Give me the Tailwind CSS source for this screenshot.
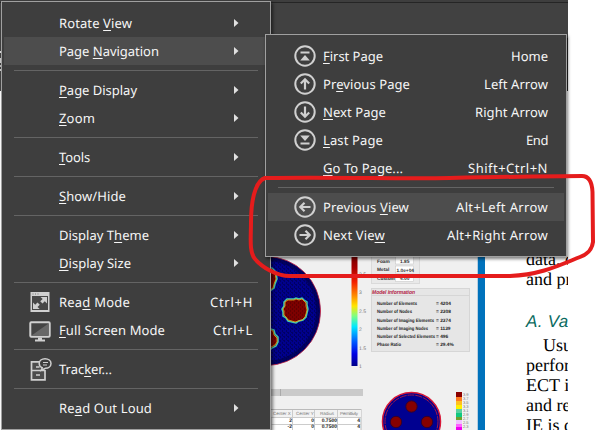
<!DOCTYPE html>
<html lang="en">
<head>
  <meta charset="UTF-8">
  <title>View Menu</title>
  <script src="https://cdn.jsdelivr.net/npm/@tailwindcss/browser@4"></script>
</head>
<body class="bg-white">
  <div class="relative w-[595px] h-[430px] overflow-hidden font-['Noto_Sans','Open_Sans',sans-serif] text-[13px] text-[#f6f6f6] [text-rendering:geometricPrecision]">

    <!-- Application window -->
    <div class="w-[568px] h-[430px] flex flex-col bg-white overflow-hidden">
      <div class="h-[3px] shrink-0 bg-[#3e3e3e] border-b border-[#252525]"></div>
      <div class="h-[88px] shrink-0 bg-[#414141] pt-12">
        <div class="w-px h-[2px] bg-[#ddd]"></div>
        <div class="w-px h-[5px] mt-[5px] bg-[#ccc]"></div>
        <div class="w-px h-[2px] mt-[2px] bg-[#bbb]"></div>
        <div class="w-px h-[2px] mt-[2px] bg-[#ccc]"></div>
      </div>
      <div class="flex h-[339px]">
        <div class="w-[271px] shrink-0"></div>

        <!-- Figure page -->
        <div class="w-[206px] shrink-0 bg-[#f0f0f0] pt-[166px]">
          <svg class="block" width="206" height="173" viewBox="271 257 206 173" font-family="Liberation Sans, sans-serif">
            <defs>
              <linearGradient id="jet" x1="0" y1="0" x2="0" y2="1">
                <stop offset="0" stop-color="#7c0000"/>
                <stop offset=".1" stop-color="#a80000"/>
                <stop offset=".23" stop-color="#f42000"/>
                <stop offset=".36" stop-color="#ff9000"/>
                <stop offset=".45" stop-color="#ffe600"/>
                <stop offset=".54" stop-color="#80ff80"/>
                <stop offset=".64" stop-color="#00e8ff"/>
                <stop offset=".78" stop-color="#0058ff"/>
                <stop offset=".89" stop-color="#0000e4"/>
                <stop offset="1" stop-color="#000088"/>
              </linearGradient>
              <pattern id="mesh" width="4" height="4" patternUnits="userSpaceOnUse">
                <rect width="4" height="4" fill="#00008c"/>
                <path d="M0 1h1M2 3h1M3 0h1" stroke="#00003c"/>
              </pattern>
              <pattern id="mesh2" width="4" height="4" patternUnits="userSpaceOnUse">
                <rect width="4" height="4" fill="#7c0000"/>
                <path d="M0 1h1M2 3h1" stroke="#4a0000"/>
              </pattern>
            </defs>
            <circle cx="266" cy="311" r="54.500" fill="url(#mesh)" stroke="#c03050"/>
            <circle cx="266" cy="311" r="52" fill="none" stroke="#000048" stroke-width="4" opacity=".6"/>
            <g fill="url(#mesh2)" stroke="#40c8b0" stroke-width="1.500">
              <path d="M262 268h10l4 4 1 7-2 5-1 4-4 3-8 1z"/>
              <path d="M290 299l4 0 2-1 3 1 3-1 2 2 3 2 0 3 1 4-1 4-1 4-3 3-4 1-3 2-4-1-4-1-2-3-3-2 0-4-1-3 2-3 0-4 3-3z"/>
              <path d="M262 329h9l3 1 1 4 3 3 0 5-2 4-4 2-3 3-7 0z"/>
            </g>
            <g fill="none" stroke="#e8b020" stroke-width=".8">
              <path d="M271 269l4 4 1 6-2 5-1 4-3 2"/>
              <path d="M290 300l4 0 2-1 3 1 3-1 2 2 2 2 0 3 1 4-1 4-1 3-3 3-4 1-3 1-3-1-4-1-2-3-2-2 0-4-1-2 2-3 0-4 3-2z"/>
              <path d="M271 330l2 1 1 4 3 3 0 4-2 3-4 2"/>
            </g>
            <rect x="351.500" y="257" width="6" height="109" fill="url(#jet)"/>
            <g font-size="5" fill="#777">
              <text x="359" y="276">3.5</text><text x="359" y="294">3</text><text x="359" y="313">2.5</text>
              <text x="359" y="331">2</text><text x="359" y="350">1.5</text><text x="359" y="368">1</text>
            </g>

            <!-- settings box -->
            <rect x="371.500" y="250" width="48" height="33.500" fill="#e9e9e9" stroke="#dadada"/>
            <g fill="#fff" stroke="#c8c8c8" stroke-width=".6">
              <rect x="395.500" y="256" width="18" height="8"/><rect x="395.500" y="266" width="18" height="7"/><rect x="395.500" y="274.500" width="18" height="7"/>
            </g>
            <g font-size="4.800" font-weight="bold" fill="#333">
              <text x="377" y="262.500">Foam</text><text x="377" y="271">Metal</text><text x="377" y="280">Custom</text>
              <text x="400" y="262.500">1.85</text><text x="396.500" y="271.500">1.0e+04</text><text x="400" y="280">4.00</text>
            </g>

            <!-- model information -->
            <rect x="371.500" y="288.500" width="98" height="63" fill="#e6e6e6" stroke="#d6d6d6"/>
            <text x="372" y="294" font-size="5.500" font-weight="bold" font-style="italic" fill="#b01840" textLength="43" lengthAdjust="spacingAndGlyphs">Model Information</text>
            <path d="M372 295.500h97" stroke="#d6d6d6"/>
            <g font-size="4.800" font-weight="bold" fill="#222" lengthAdjust="spacingAndGlyphs">
              <text x="377" y="305" textLength="40" lengthAdjust="spacingAndGlyphs">Number of Elements</text>
              <text x="377" y="313" textLength="35" lengthAdjust="spacingAndGlyphs">Number of Nodes</text>
              <text x="377" y="321.500" textLength="57" lengthAdjust="spacingAndGlyphs">Number of Imaging Elements</text>
              <text x="377" y="329.500" textLength="51" lengthAdjust="spacingAndGlyphs">Number of Imaging Nodes</text>
              <text x="377" y="338" textLength="58" lengthAdjust="spacingAndGlyphs">Number of Selected Elements</text>
              <text x="377" y="346" textLength="24" lengthAdjust="spacingAndGlyphs">Phase Ratio</text>
              <text x="436" y="305">= 4204</text><text x="436" y="313">= 2308</text><text x="436" y="321.500">= 2374</text>
              <text x="436" y="329.500">= 1139</text><text x="436" y="338">= 496</text><text x="436" y="346">= 29.4%</text>
            </g>

            <!-- table -->
            <rect x="271" y="389" width="92" height="7" fill="#cacaca"/>
            <path d="M280.500 389v7" stroke="#aaa"/>
            <rect x="271" y="409.500" width="90" height="22" fill="#fff" stroke="#bbb"/>
            <rect x="271" y="410" width="90" height="7" fill="#f2f2f2"/>
            <path d="M271 417.500h90M271 424.500h90M292.500 410v20M314.500 410v20M337.500 410v20" stroke="#ccc"/>
            <g font-size="4.500" fill="#777">
              <text x="273" y="415">Center X</text><text x="296" y="415">Center Y</text><text x="320" y="415">Radius</text><text x="340" y="415" textLength="18">Permittivity</text>
            </g>
            <g font-size="5" font-weight="bold" fill="#222" text-anchor="end">
              <text x="292" y="421.500">2</text><text x="314" y="421.500">0</text><text x="337" y="421.500">0.7500</text><text x="360" y="421.500">4</text>
              <text x="292" y="428">-2</text><text x="314" y="428">0</text><text x="337" y="428">0.7500</text><text x="360" y="428">4</text>
            </g>

            <!-- second phantom -->
            <circle cx="411.500" cy="421.500" r="29" fill="#000090" stroke="#d81838" stroke-width="1.500"/>
            <circle cx="411.500" cy="421.500" r="26.500" fill="none" stroke="#a01848" stroke-dasharray="7 1"/>
            <g fill="#860000" stroke="#300030">
              <circle cx="411.500" cy="406.500" r="5.700"/><circle cx="396" cy="422" r="5.700"/><circle cx="427" cy="422" r="5.700"/>
            </g>
            <g>
              <rect x="456" y="392" width="6" height="5" fill="#8a0000"/><rect x="456" y="397" width="6" height="4" fill="#ff7a20"/>
              <rect x="456" y="401" width="6" height="4" fill="#ffc020"/><rect x="456" y="405" width="6" height="4" fill="#fff000"/>
              <rect x="456" y="409" width="6" height="4" fill="#58d0a0"/><rect x="456" y="413" width="6" height="4" fill="#10c880"/>
              <rect x="456" y="417" width="6" height="3" fill="#70a030"/><rect x="456" y="420" width="6" height="4" fill="#f0c0ff"/>
              <rect x="456" y="424" width="6" height="3" fill="#ff60ff"/><rect x="456" y="427" width="6" height="3" fill="#f000f0"/>
            </g>
            <g font-size="4" fill="#777">
              <text x="463" y="396">3.9</text><text x="463" y="400">3.7</text><text x="463" y="404">3.5</text><text x="463" y="408">3.3</text>
              <text x="463" y="412">3.1</text><text x="463" y="416">2.9</text><text x="463" y="420">2.7</text><text x="463" y="424">2.5</text><text x="463" y="428">2.3</text>
            </g>
          </svg>
        </div>
        <div class="w-2 shrink-0 bg-[#0072bc] border-l border-[#b8cfe0]"></div>

        <!-- Article column -->
        <div class="w-[83px] shrink-0 overflow-hidden pl-[41px] pt-[158px] font-['Liberation_Serif',serif] text-[18px] leading-5 text-black whitespace-nowrap">
          <p>data, c</p>
          <p>and pr</p>
          <p class="pt-[23px] font-['Liberation_Sans',sans-serif] italic text-[#0b6b60] tracking-[0.3px] text-[17px]">A. Va</p>
          <p class="pt-[3px] pl-[17px]">Usu</p>
          <p>perfor</p>
          <p>ECT i</p>
          <p>and re</p>
          <p>IE is d</p>
        </div>
      </div>
    </div>
    <div class="absolute left-[567px] top-[38px] w-px h-[53px] bg-[#222]"></div>

    <!-- View menu -->
    <div id="viewMenu" class="absolute left-px top-px w-[270px] h-[429px] bg-[#3e3e3e] border border-[#a0a0a0] px-[2px] py-[7px] shadow-[2px_2px_3px_rgba(0,0,0,0.5)]"></div>

    <!-- Page Navigation submenu -->
    <div id="navMenu" class="absolute left-[265px] top-[34px] w-[302px] h-[223px] bg-[#3e3e3e] border border-[#a0a0a0] px-[2px] py-[7px] shadow-[1px_2px_3px_rgba(0,0,0,0.5)]"></div>

    <!-- Red marker -->
    <svg class="absolute left-0 top-0" width="595" height="430" fill="none" stroke="#e51c1c" stroke-width="4" stroke-linecap="round" stroke-linejoin="round">
      <path d="M265 178C340 177 400 179 450 178C500 177 550 176 582 176C589 176 592 182 592.500 192L593 242C592 250 588 254 580 257C560 265 540 275 510 276L290 276C276 276 262 267 255 259C249 252 251 238 251 222C251 204 254 182 265 178Z"/>
    </svg>
  </div>

  <script>
    const icons = {
      first: '<path d="M6.500 7.500h9" stroke-width="2"/><path d="M6.200 15.500h9.600L11 10z" fill="#d0d0d0" stroke="none"/>',
      last: '<path d="M6.500 14.500h9" stroke-width="2"/><path d="M6.200 6.500h9.600L11 12z" fill="#d0d0d0" stroke="none"/>',
      up: '<path d="M11 16.500v-10M6.800 10.500l4.200-4.200 4.200 4.200"/>',
      down: '<path d="M11 5.500v10M6.800 11.500l4.200 4.200 4.200-4.200"/>',
      left: '<path d="M16.500 11h-10M10.500 6.800l-4.200 4.200 4.200 4.200"/>',
      right: '<path d="M5.500 11h10M11.500 6.800l4.200 4.200-4.200 4.200"/>',
      read: '<rect x="1.500" y="2" width="19" height="20" fill="#d0d0d0"/><path d="M3.500 4h1M6 4h1M8.500 4h1" stroke="#777" stroke-width="1"/><rect x="3" y="6" width="16" height="14" fill="#484848"/><path d="M11.500 7H18v6.500l-2.200-2.200-2.300 2.200-2.300-2.200 2.500-2.200zM4 12.500l2.200 2.200 2.300-2.200 2.300 2.300-2.300 2.200 2.200 2H4z" fill="#d0d0d0"/>',
      screen: '<rect x="1.300" y="4.300" width="19.400" height="14.400" rx="1" fill="#444" stroke="#d0d0d0" stroke-width="2"/><path d="M2.500 17.500h17V5.500z" fill="#686868"/><path d="M9 19.500h4v2h3v2H6v-2h3z" fill="#d0d0d0"/>',
      tracker: '<path d="M10 4.800H2.500v18h13.500V13M3 13.500h13" fill="#4d4d4d" stroke="#d0d0d0" stroke-width="1.700"/><path d="M7 10h3.500M7 18h4" stroke="#d0d0d0" stroke-width="1.300"/><path d="M16 1.800c3.500 0 6 2 6 4.700s-2.500 4.700-5.500 4.700l-4.300 2 1-2.500c-2-.8-3-2.300-3-4.200 0-2.700 2.500-4.700 5.800-4.700z" fill="#3e3e3e" stroke="#d0d0d0" stroke-width="1.500"/><path d="M14 5.500h5M14 8h4" stroke="#d0d0d0" stroke-width="1.200"/>'
    };

    // [label, width, icon, shortcut, shortcut width, highlighted]; "_" marks the access key
    const viewItems = [
      ["Rotate _View", 73, "", ">"],
      ["Page _Navigation", 100, "", ">", 0, true],
      null,
      ["_Page Display", 78, "", ">"],
      ["_Zoom", 36, "", ">"],
      null,
      ["_Tools", 31, "", ">"],
      null,
      ["_Show/Hide", 67, "", ">"],
      null,
      ["Display T_heme", 90, "", ">"],
      ["_Display Size", 72, "", ">"],
      null,
      ["Rea_d Mode", 71, "read", "Ctrl+H", 43],
      ["_Full Screen Mode", 106, "screen", "Ctrl+L", 40],
      null,
      ["Trac_ker...", 53, "tracker", ""],
      null,
      ["Re_ad Out Loud", 93, "", ">"]
    ];
    const navItems = [
      ["_First Page", 60, "first", "Home", 37],
      ["Pr_evious Page", 87, "up", "Left Arrow", 64],
      ["_Next Page", 63, "down", "Right Arrow", 73],
      ["_Last Page", 60, "last", "End", 22],
      ["_Go To Page...", 80, "", "Shift+Ctrl+N", 80],
      null,
      ["Previous _View", 86, "left", "Alt+Left Arrow", 92, true],
      ["Next Vie_w", 62, "right", "Alt+Right Arrow", 101]
    ];

    function buildMenu(id, items, nav) {
      document.getElementById(id).innerHTML = items.map(item => {
        if (!item) {
          return '<div class="h-[11px] flex items-center px-[10px]"><div class="h-px w-full bg-[#646464]' + (nav ? '' : ' mr-[-3px]') + '"></div></div>';
        }
        const [label, width, icon, key, keyWidth, active] = item;
        const text = label.replace(/_(.)/, '<span class="underline decoration-1 underline-offset-2 [text-decoration-skip-ink:none]">$1</span>');
        let svg = "";
        if (icon && nav) {
          svg = '<svg width="22" height="22" fill="none" stroke="#d0d0d0" stroke-width="2.200"><circle cx="11" cy="11" r="9.700" stroke-width="2"/>' + icons[icon] + '</svg>';
        } else if (icon) {
          svg = '<svg width="24" height="25" viewBox="0 0 24 25" fill="none">' + icons[icon] + '</svg>';
        }
        let right = '<span data-w="' + keyWidth + '" class="shrink-0 leading-[15px] whitespace-nowrap">' + key + '</span>';
        if (key === ">") {
          right = '<svg class="mr-[14px]" width="5" height="8"><path d="M0 0l4.500 4L0 8z" fill="#e0e0e0"/></svg>';
        }
        return '<div class="h-7 flex items-center ' + (active ? 'bg-[#4d4d4d] ' : '') + (nav ? 'pl-[26px] pr-4' : 'pl-[25px] pr-[15px]') + '">' +
          '<span class="shrink-0 ' + (nav ? 'w-[29px]' : 'w-[30px]') + '">' + svg + '</span>' +
          '<span data-w="' + width + '" class="shrink-0 leading-[15px] whitespace-nowrap">' + text + '</span>' +
          '<span class="flex-1"></span>' + right + '</div>';
      }).join("");
    }

    // spread the letters so each label takes its listed width
    function fitLabels() {
      document.querySelectorAll("[data-w]").forEach(el => {
        const target = Number(el.dataset.w);
        if (!target || !el.textContent) return;
        el.style.letterSpacing = "0px";
        const gap = (target - el.getBoundingClientRect().width) / el.textContent.length;
        el.style.letterSpacing = gap + "px";
      });
    }

    buildMenu("viewMenu", viewItems, false);
    buildMenu("navMenu", navItems, true);
    fitLabels();
    window.addEventListener("load", fitLabels);
  </script>
</body>
</html>
